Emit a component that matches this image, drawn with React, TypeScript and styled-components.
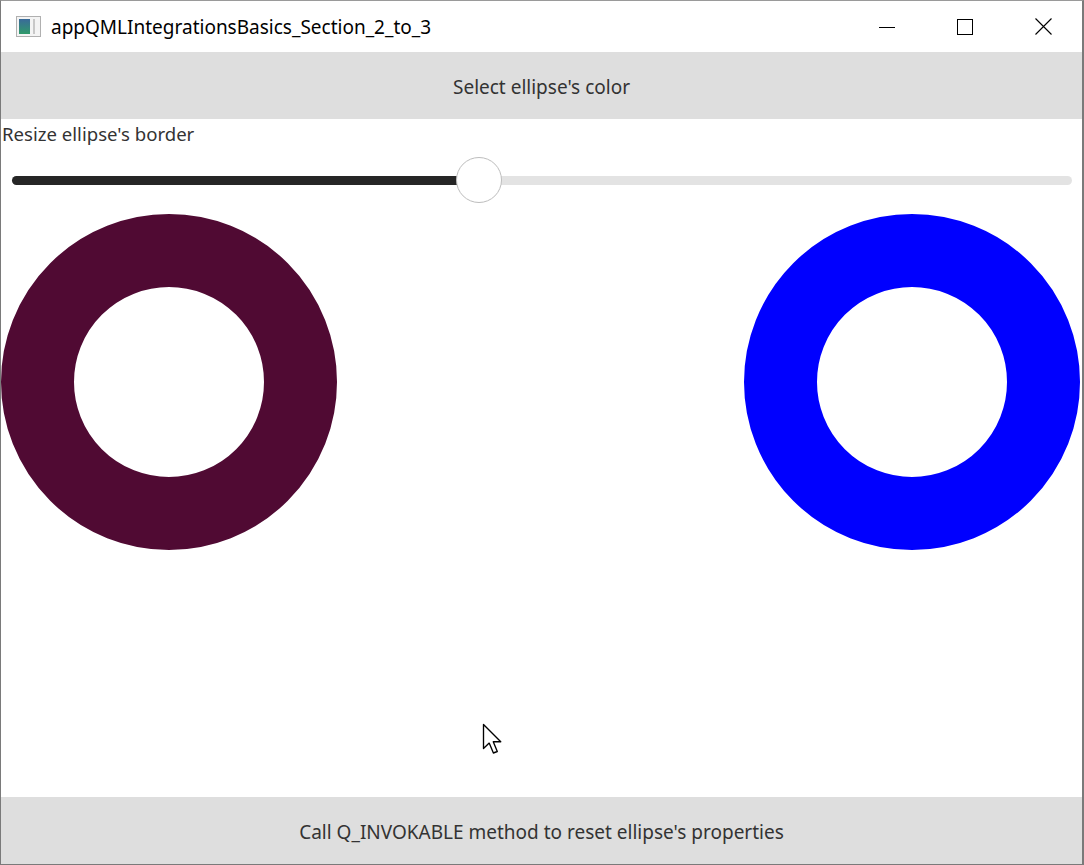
import React from "react";
import styled, { createGlobalStyle } from "styled-components";

const Global = createGlobalStyle`
  html, body { margin: 0; padding: 0; background: #ffffff; }
  * { box-sizing: border-box; }
`;

const Window = styled.div`
  width: 1084px;
  height: 865px;
  display: flex;
  flex-direction: column;
  background: #ffffff;
  border-left: 1px solid #7a7a7a;
  border-right: 2px solid #7a7a7a;
  border-bottom: 1px solid #7a7a7a;
  border-top: 1px solid #9a9a9a;
  font-family: "Noto Sans", sans-serif;
  position: relative;
  overflow: hidden;
`;

const TitleBar = styled.div`
  height: 51px;
  display: flex;
  align-items: center;
  padding-left: 15px;
  flex-shrink: 0;
`;

const TitleText = styled.span`
  margin-left: 10px;
  font-size: 19px;
  color: #000;
  font-family: "Noto Sans", sans-serif;
`;

const Controls = styled.div`
  margin-left: auto;
  display: flex;
  height: 100%;
`;

const ControlButton = styled.div`
  width: 78px;
  height: 100%;
  display: flex;
  align-items: center;
  justify-content: center;
`;

const ActionButton = styled.div<{ $h: number }>`
  height: ${(p) => p.$h}px;
  flex-shrink: 0;
  background: #dedede;
  display: flex;
  align-items: center;
  justify-content: center;
  font-family: "Noto Sans", sans-serif;
  font-size: 19px;
  color: #333333;
  padding-top: 2px;
`;

const Label = styled.div`
  margin-top: 2px;
  padding-left: 1px;
  height: 26px;
  line-height: 26px;
  font-family: "Noto Sans", sans-serif;
  font-size: 18.6px;
  color: #333333;
`;

const SliderArea = styled.div`
  margin-top: 10px;
  height: 46px;
  padding: 0 10px 0 11px;
  display: flex;
  align-items: center;
`;

const Track = styled.div`
  position: relative;
  flex: 1;
  height: 9px;
  border-radius: 5px;
  background: #e3e3e3;
`;

const Fill = styled.div`
  height: 100%;
  border-radius: 5px;
  background: #262626;
`;

const Handle = styled.div`
  position: absolute;
  top: 50%;
  width: 46px;
  height: 46px;
  margin-left: -23px;
  margin-top: -23px;
  border-radius: 50%;
  background: #ffffff;
  border: 1.5px solid #bdbdbd;
`;

const RingRow = styled.div`
  margin-top: 11px;
  display: flex;
  justify-content: space-between;
  padding: 0 2px 0 0;
`;

const Ring = styled.div<{ $color: string }>`
  width: 336px;
  height: 336px;
  border-radius: 50%;
  border: 73px solid ${(p) => p.$color};
`;

const Spacer = styled.div`
  flex: 1;
`;

const Cursor = styled.svg`
  position: absolute;
  left: 481px;
  top: 722px;
`;

export default function App() {
  const trackWidth = 1060;
  const value = 467;
  return (
    <>
      <Global />
      <Window>
        <TitleBar>
          <svg width="25" height="21" viewBox="0 0 25 21">
            <rect x="0.5" y="0.5" width="24" height="20" fill="#f4f4f4" stroke="#b0b0b0" />
            <defs>
              <linearGradient id="g" x1="0" y1="0" x2="0" y2="1">
                <stop offset="0" stopColor="#3a6a9a" />
                <stop offset="1" stopColor="#2f9a6a" />
              </linearGradient>
            </defs>
            <rect x="3" y="3" width="11" height="15" fill="url(#g)" />
            <rect x="17" y="3" width="2" height="15" fill="#c8c8c8" />
          </svg>
          <TitleText>appQMLIntegrationsBasics_Section_2_to_3</TitleText>
          <Controls>
            <ControlButton>
              <svg width="16" height="16" viewBox="0 0 16 16">
                <line x1="0" y1="8.5" x2="16" y2="8.5" stroke="#000" strokeWidth="1" />
              </svg>
            </ControlButton>
            <ControlButton>
              <svg width="16" height="16" viewBox="0 0 16 16">
                <rect x="0.5" y="0.5" width="15" height="15" fill="none" stroke="#000" strokeWidth="1" />
              </svg>
            </ControlButton>
            <ControlButton>
              <svg width="17" height="17" viewBox="0 0 17 17">
                <path d="M0.5 0.5 L16.5 16.5 M16.5 0.5 L0.5 16.5" stroke="#000" strokeWidth="1.1" />
              </svg>
            </ControlButton>
          </Controls>
        </TitleBar>
        <ActionButton $h={67}>Select ellipse's color</ActionButton>
        <Label>Resize ellipse's border</Label>
        <SliderArea>
          <Track>
            <Fill style={{ width: `${value}px` }} />
            <Handle style={{ left: `${(value / trackWidth) * 100}%` }} />
          </Track>
        </SliderArea>
        <RingRow>
          <Ring $color="#500a33" />
          <Ring $color="#0000ff" />
        </RingRow>
        <Spacer />
        <ActionButton $h={67}>Call Q_INVOKABLE method to reset ellipse's properties</ActionButton>
        <Cursor width="21" height="33" viewBox="0 0 14 22">
          <path
            d="M1 1 L1 17 L4.8 13.4 L7.6 20 L10.2 19 L7.5 12.5 L12.5 12.5 Z"
            fill="#ffffff"
            stroke="#000000"
            strokeWidth="0.9"
            strokeLinejoin="round"
          />
        </Cursor>
      </Window>
    </>
  );
}
